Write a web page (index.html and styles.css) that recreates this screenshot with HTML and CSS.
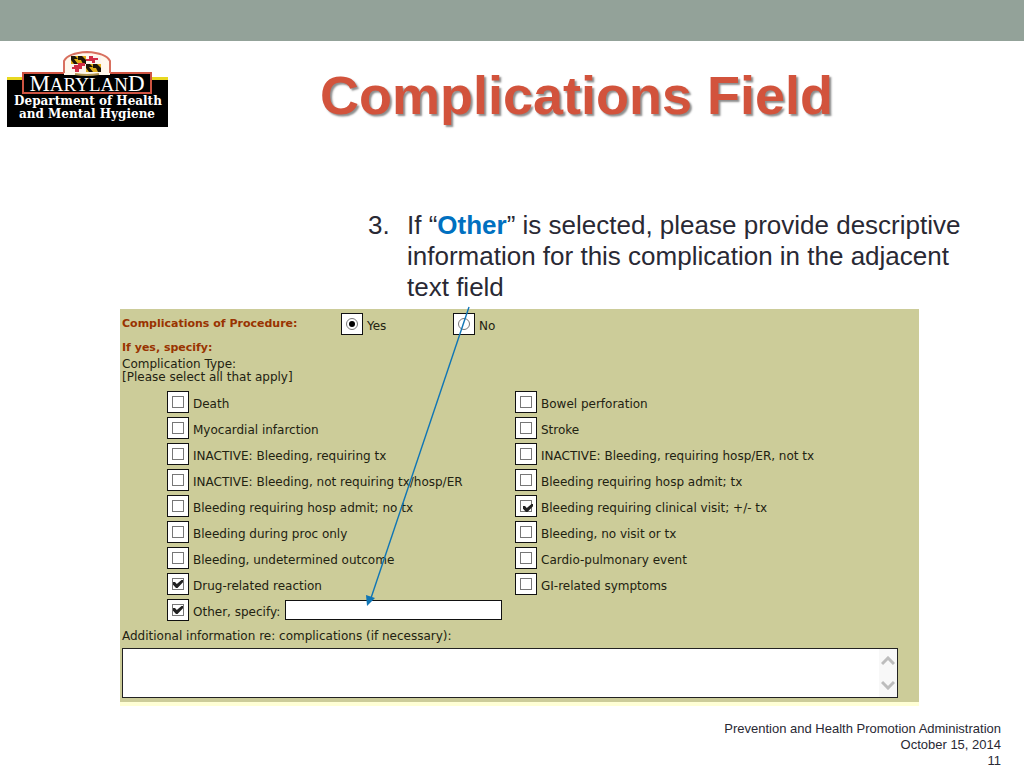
FILE: index.html
```
<!DOCTYPE html>
<html lang="en">
<head>
    <meta charset="UTF-8">
    <meta name="viewport" content="width=device-width, initial-scale=1.0">
    <title>Complications Field</title>
    <link rel="stylesheet" href="styles.css">
</head>
<body>
    <div class="top-bar"></div>

    <header class="header">
        <svg class="logo" width="162" height="76" viewBox="0 0 162 76" role="img" aria-label="Maryland Department of Health and Mental Hygiene">
            <rect x="0" y="28" width="161" height="48" fill="#000"/>
            <rect x="0" y="26" width="161" height="3" fill="#e8d820"/>
            <rect x="16" y="22" width="128" height="20" fill="#000" stroke="#cf5442" stroke-width="2"/>
            <!-- arch with the state flag -->
            <path d="M57 24V10Q61 2 80 1Q99 2 103 10V24Z" fill="#fff8ec"/>
            <path d="M57 22V10Q61 2 80 1Q99 2 103 10V22" fill="none" stroke="#d8705f" stroke-width="2"/>
            <rect x="64" y="5" width="30" height="16" fill="#fbf3ee"/>
            <path d="M64 5h15v8H64zM79 13h15v8H79z" fill="#e0ad18"/>
            <path d="M64 5h4l3 3h-4l4 5h-4l-3-4zM71 5h4l4 4v4h-3l-2-4h-3zM79 13h4l3 3h-4l4 5h-4l-3-4zM86 13h4l4 4v4h-3l-2-4h-3z" fill="#1c1408"/>
            <path d="M82 5h4v2h5v2h-3v3h-3v-2h-6V8h3zM67 14h4v-2h7v3h-3v3h-3v3h-4v-3h-3v-2h2z" fill="#d12c45"/>
            <path d="M68 23q12 2 24 0" fill="none" stroke="#b39650" stroke-width="2"/>
            <text x="80" y="40" class="logo-name"><tspan class="logo-cap">M</tspan>ARYLAN<tspan class="logo-cap">D</tspan></text>
            <text x="81" y="54" class="logo-dept">Department of Health</text>
            <text x="80" y="67" class="logo-dept">and Mental Hygiene</text>
        </svg>
        <h1 class="title">Complications Field</h1>
    </header>

    <main class="content">
        <div class="steps">
            <span>3.</span>
            <p>If “<strong>Other</strong>” is selected, please provide descriptive information for this complication in the adjacent text field</p>
        </div>

        <form class="panel">
            <div class="procedure">
                <span class="heading">Complications of Procedure:</span>
                <label class="option"><span class="box"><input type="radio" name="procedure" checked></span>Yes</label>
                <label class="option"><span class="box"><input type="radio" name="procedure"></span>No</label>
            </div>
            <p class="heading specify">If yes, specify:</p>
            <p class="hint">Complication Type:<br>[Please select all that apply]</p>

            <div class="options">
                <label class="option"><span class="box"><input type="checkbox"></span>Death</label>
                <label class="option"><span class="box"><input type="checkbox"></span>Bowel perforation</label>
                <label class="option"><span class="box"><input type="checkbox"></span>Myocardial infarction</label>
                <label class="option"><span class="box"><input type="checkbox"></span>Stroke</label>
                <label class="option"><span class="box"><input type="checkbox"></span>INACTIVE: Bleeding, requiring tx</label>
                <label class="option"><span class="box"><input type="checkbox"></span>INACTIVE: Bleeding, requiring hosp/ER, not tx</label>
                <label class="option"><span class="box"><input type="checkbox"></span>INACTIVE: Bleeding, not requiring tx/hosp/ER</label>
                <label class="option"><span class="box"><input type="checkbox"></span>Bleeding requiring hosp admit; tx</label>
                <label class="option"><span class="box"><input type="checkbox"></span>Bleeding requiring hosp admit; no tx</label>
                <label class="option"><span class="box"><input type="checkbox" class="low-tick" checked></span>Bleeding requiring clinical visit; +/- tx</label>
                <label class="option"><span class="box"><input type="checkbox"></span>Bleeding during proc only</label>
                <label class="option"><span class="box"><input type="checkbox"></span>Bleeding, no visit or tx</label>
                <label class="option"><span class="box"><input type="checkbox"></span>Bleeding, undetermined outcome</label>
                <label class="option"><span class="box"><input type="checkbox"></span>Cardio-pulmonary event</label>
                <label class="option"><span class="box"><input type="checkbox" checked></span>Drug-related reaction</label>
                <label class="option"><span class="box"><input type="checkbox"></span>GI-related symptoms</label>
                <div class="other">
                    <label class="option"><span class="box"><input type="checkbox" checked></span>Other, specify:</label>
                    <input type="text" class="other-text" aria-label="Other complication">
                </div>
            </div>

            <label class="additional-label" for="additional">Additional information re: complications (if necessary):</label>
            <div class="additional">
                <textarea id="additional" rows="2"></textarea>
                <div class="scroll">
                    <svg width="14" height="10" viewBox="0 0 14 10"><path d="M1 8L7 2L13 8" fill="none" stroke="#bdbdbd" stroke-width="3"/></svg>
                    <svg width="14" height="10" viewBox="0 0 14 10"><path d="M1 2L7 8L13 2" fill="none" stroke="#bdbdbd" stroke-width="3"/></svg>
                </div>
            </div>

            <!-- arrow pointing at the "Other" text field -->
            <svg class="arrow" width="112" height="302" viewBox="0 0 112 302" aria-hidden="true">
                <path d="M106 1L8 292" stroke="#0f75b5" stroke-width="1.4"/>
                <path d="M4 300L3 289L12 292Z" fill="#0f75b5"/>
            </svg>
        </form>
    </main>

    <footer class="footer">
        <div>Prevention and Health Promotion Administration</div>
        <div>October 15, 2014</div>
        <div>11</div>
    </footer>
</body>
</html>
```
FILE: styles.css
```
* {
    box-sizing: border-box;
}

body {
    margin: 0;
    background-color: #fff;
    color: #292934;
    font-family: "Liberation Sans", Arial, sans-serif;
}

.top-bar {
    height: 41px;
    background-color: #93a299;
}

.header {
    display: grid;
    grid-template-columns: 162px 1fr;
    align-items: start;
    padding: 10px 30px 0 7px;
}

.logo {
    display: block;
}

.logo-name,
.logo-dept {
    fill: #fff;
    text-anchor: middle;
}

.logo-name {
    font-family: "Liberation Serif", "Times New Roman", serif;
    font-size: 19px;
}

.logo-cap {
    font-size: 23px;
}

.logo-dept {
    font-family: "DejaVu Serif", serif;
    font-size: 12px;
    font-weight: bold;
}

.title {
    margin: 12px 0 0;
    padding-right: 10px;
    text-align: center;
    font-size: 54px;
    line-height: 64px;
    color: #d2533c;
    text-shadow: 2px 2px 2px rgba(0, 0, 0, 0.45);
}

.content {
    padding: 83px 105px 0 120px;
}

.steps {
    display: grid;
    grid-template-columns: 39px 1fr;
    margin: 0 -60px 0 248px;
    font-size: 26px;
    line-height: 31px;
}

.steps p {
    margin: 0;
}

.steps strong {
    color: #0070c0;
}

.panel {
    position: relative;
    margin-top: 6px;
    padding: 4px 21px 4px 2px;
    background-color: #cccc99;
    border-bottom: 4px solid #ffffd5;
    color: #222211;
    font-family: "DejaVu Sans", Verdana, sans-serif;
    font-size: 12px;
    line-height: 13px;
}

.procedure {
    display: grid;
    grid-template-columns: 219px 112px 1fr;
}

.heading {
    padding-top: 4px;
    font-size: 11px;
    font-weight: bold;
    color: #993300;
}

.specify {
    margin: 1px 0 0;
    padding: 0;
}

.hint {
    margin: 4px 0 7px;
}

.option {
    display: flex;
    align-items: flex-start;
    gap: 4px;
    line-height: 27px;
    white-space: nowrap;
}

.box {
    display: flex;
    flex: none;
    align-items: center;
    justify-content: center;
    width: 22px;
    height: 22px;
    background-color: #fff;
    border: 1px solid #111;
}

.box input {
    display: flex;
    align-items: center;
    justify-content: center;
    appearance: none;
    width: 12px;
    height: 12px;
    margin: 0;
    border: 1px solid #777;
    background-color: #fff;
}

.box input[type="radio"] {
    border-radius: 50%;
}

.box input[type="radio"]:checked::after {
    content: "";
    width: 6px;
    height: 6px;
    border-radius: 50%;
    background-color: #000;
}

.box input[type="checkbox"]:checked::after {
    content: "";
    flex: none;
    width: 10px;
    height: 8px;
    background-color: #222;
    clip-path: polygon(0 25%, 20% 25%, 38% 50%, 85% 0, 100% 0, 100% 28%, 45% 100%, 30% 100%, 0 60%);
}

.box .low-tick:checked {
    padding: 4px 0 0 4px;
}

.options {
    display: grid;
    grid-template-columns: 348px 1fr;
    grid-auto-rows: 26px;
    padding-left: 45px;
}

.other {
    display: flex;
    grid-column: 1 / -1;
    gap: 5px;
}

.other-text {
    width: 217px;
    height: 20px;
    margin-top: 1px;
    padding: 0 4px;
    border: 1px solid #111;
    background-color: #fff;
    font: inherit;
}

.additional-label {
    display: block;
    margin: 5px 0;
}

.additional {
    display: flex;
    background-color: #fff;
    border: 1px solid #222;
}

.additional textarea {
    flex: 1;
    height: 48px;
    padding: 4px;
    border: 0;
    outline: 0;
    resize: none;
    background: none;
    font: inherit;
}

.scroll {
    display: flex;
    flex-direction: column;
    justify-content: space-between;
    padding: 7px 2px;
    background-color: #f8f8f8;
}

.arrow {
    position: absolute;
    left: 243px;
    top: -3px;
}

.footer {
    padding: 15px 23px 0 0;
    text-align: right;
    font-size: 13px;
    line-height: 16px;
}
```
